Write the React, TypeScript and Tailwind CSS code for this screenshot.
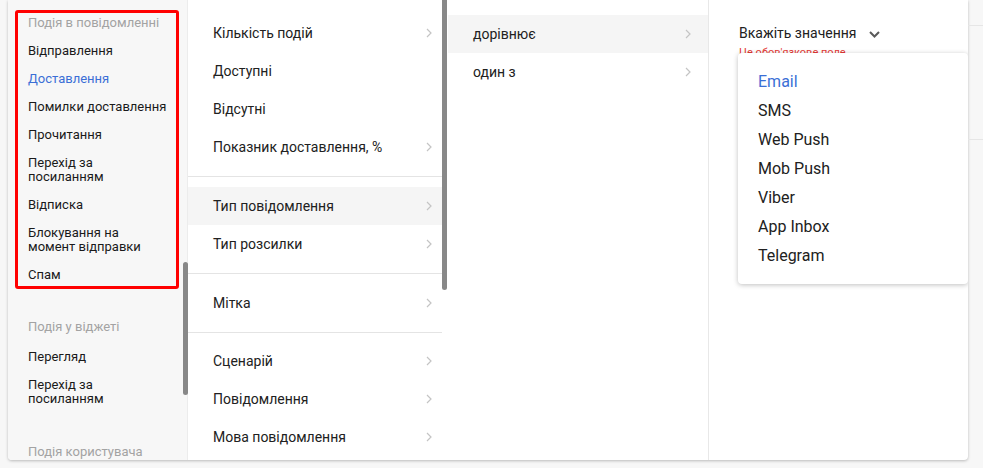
const font = { fontFamily: "Roboto, 'Noto Sans', sans-serif" };

function Chevron() {
  return (
    <svg width="6" height="10" viewBox="0 0 6 10" className="shrink-0">
      <path d="M1 1l4 4-4 4" fill="none" stroke="#c4c4c4" strokeWidth="1.2" />
    </svg>
  );
}

function Row({ label, arrow = true, active = false }: { label: string; arrow?: boolean; active?: boolean }) {
  return (
    <div
      className={`flex h-[38px] items-center justify-between pl-[25px] pr-[10px] text-[14px] text-[#212121] ${
        active ? "bg-[#f5f5f5]" : ""
      }`}
    >
      <span>{label}</span>
      {arrow && <Chevron />}
    </div>
  );
}

function EventItem({ label, blue = false }: { label: string; blue?: boolean }) {
  return (
    <div
      className={`whitespace-pre-line py-[7px] pl-[10px] pr-2 text-[13px] leading-[14px] ${
        blue ? "text-[#3b6fd6]" : "text-[#1a1a1a]"
      }`}
    >
      {label}
    </div>
  );
}

function SectionTitle({ label }: { label: string }) {
  return <div className="h-[26px] pt-[3px] pl-[10px] text-[13px] leading-[14px] text-[#a3a3a3]">{label}</div>;
}

export default function App() {
  return (
    <div className="flex h-[468px] w-[983px] overflow-hidden bg-[#f7f7f7]" style={font}>
      <div className="ml-2 flex h-[460px] w-[960px] shrink-0 overflow-hidden rounded-b-[4px] bg-white shadow-[0_1px_3px_rgba(0,0,0,0.25)]">
        {/* events column */}
        <div className="relative w-[180px] shrink-0 border-r border-[#ececec] bg-[#f7f7f7]">
          <div className="ml-[7px] mt-[10px] w-[164px] rounded-[3px] border-[3px] border-[#ff0000]">
            <div className="h-[24px] pt-[3px] pl-[10px] text-[13px] leading-[14px] text-[#a3a3a3]">
              Подія в повідомленні
            </div>
            <EventItem label="Відправлення" />
            <EventItem label="Доставлення" blue />
            <EventItem label="Помилки доставлення" />
            <EventItem label="Прочитання" />
            <EventItem label={"Перехід за\nпосиланням"} />
            <EventItem label="Відписка" />
            <EventItem label={"Блокування на\nмомент відправки"} />
            <div className="pt-[7px] pb-[4px] pl-[10px] text-[13px] leading-[14px] text-[#1a1a1a]">Спам</div>
          </div>
          <div className="mt-[28px] pl-[10px]">
            <SectionTitle label="Подія у віджеті" />
            <EventItem label="Перегляд" />
            <EventItem label={"Перехід за\nпосиланням"} />
            <div className="mt-[29px]">
              <SectionTitle label="Подія користувача" />
            </div>
          </div>
          <div className="absolute right-[-1px] top-[262px] h-[133px] w-[5px] rounded-full bg-[#888]" />
        </div>

        {/* fields column */}
        <div className="relative w-[260px] shrink-0 pr-[6px]">
          <div className="border-b border-[#e4e4e4] pt-[14px] pb-[10px]">
            <Row label="Кількість подій" />
            <Row label="Доступні" arrow={false} />
            <Row label="Відсутні" arrow={false} />
            <Row label="Показник доставлення, %" />
          </div>
          <div className="border-b border-[#e4e4e4] py-[10px]">
            <Row label="Тип повідомлення" active />
            <Row label="Тип розсилки" />
          </div>
          <div className="border-b border-[#e4e4e4] py-[10px]">
            <Row label="Мітка" />
          </div>
          <div className="py-[9px]">
            <Row label="Сценарій" />
            <Row label="Повідомлення" />
            <Row label="Мова повідомлення" />
          </div>
          <div className="absolute right-[1px] top-[-4px] h-[294px] w-[5px] rounded-full bg-[#888]" />
        </div>

        {/* operators column */}
        <div className="w-[261px] shrink-0 border-r border-[#e8e8e8] pt-[15px]">
          <div className="flex h-[38px] items-center justify-between bg-[#f5f5f5] pl-[25px] pr-[17px] text-[14px] text-[#212121]">
            <span>дорівнює</span>
            <Chevron />
          </div>
          <div className="flex h-[38px] items-center justify-between pl-[25px] pr-[17px] text-[14px] text-[#212121]">
            <span>один з</span>
            <Chevron />
          </div>
        </div>

        {/* value column */}
        <div className="relative flex-1 pl-[30px] pt-[24px]">
          <div className="flex items-center text-[14px] leading-[18px] text-[#212121]">
            <span>Вкажіть значення</span>
            <svg width="11" height="7" viewBox="0 0 11 7" className="ml-[12px] mt-[2px]">
              <path d="M1 1l4.5 4.5L10 1" fill="none" stroke="#5a5a5a" strokeWidth="2" />
            </svg>
          </div>
          <div className="mt-[5px] text-[11px] leading-[12px] text-[#e53935]">Це обов'язкове поле</div>
          <div className="absolute left-[29px] top-[53px] w-[230px] rounded-[4px] bg-white py-[14px] shadow-[0_1px_5px_rgba(0,0,0,0.25)]">
            {["Email", "SMS", "Web Push", "Mob Push", "Viber", "App Inbox", "Telegram"].map((t, i) => (
              <div
                key={t}
                className={`flex h-[29px] items-center pl-[20px] text-[16px] ${
                  i === 0 ? "text-[#3b6fd6]" : "text-[#212121]"
                }`}
              >
                {t}
              </div>
            ))}
          </div>
        </div>
      </div>

      {/* background behind panel */}
      <div className="flex-1 pt-[25px]">
        <div className="h-[115px] border-y border-[#e6e6e6]" />
      </div>
    </div>
  );
}
